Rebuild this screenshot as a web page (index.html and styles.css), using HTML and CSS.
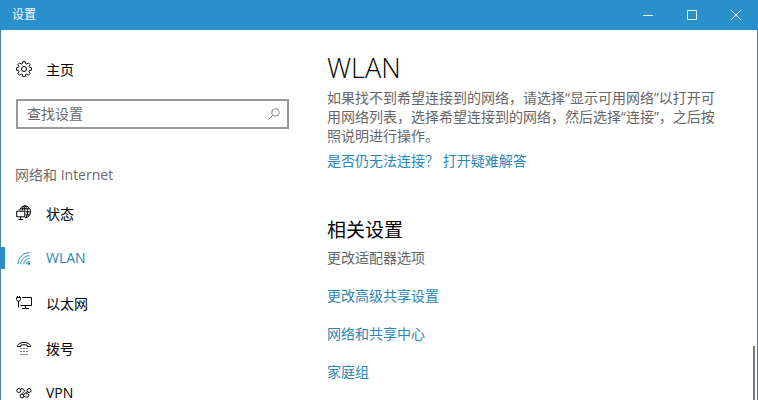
FILE: index.html
```
<!DOCTYPE html>
<html lang="zh-CN">
<head>
    <meta charset="UTF-8">
    <meta name="viewport" content="width=device-width, initial-scale=1.0">
    <title>设置</title>
    <link rel="stylesheet" href="styles.css">
</head>
<body>
    <div class="window">
        <header class="titlebar">
            <span class="title">设置</span>
            <div class="window-buttons">
                <button type="button" aria-label="最小化">
                    <svg width="10" height="10" viewBox="0 0 10 10"><path d="M0 5.5h10"/></svg>
                </button>
                <button type="button" aria-label="最大化">
                    <svg width="10" height="10" viewBox="0 0 10 10"><path d="M.5.5h9v9h-9z"/></svg>
                </button>
                <button type="button" aria-label="关闭">
                    <svg width="10" height="10" viewBox="0 0 10 10"><path d="M0 0l10 10M10 0L0 10"/></svg>
                </button>
            </div>
        </header>

        <div class="body">
            <aside class="sidebar">
                <a class="nav-item home" href="#home">
                    <svg class="icon" viewBox="0 0 16 16">
                        <path d="M6.7.7h2.6l.4 1.9 1 .4 1.7-1.1 1.8 1.8-1.1 1.7.4 1 1.9.4v2.5l-1.9.4-.4 1 1.1 1.7-1.8 1.8-1.7-1.1-1 .4-.4 1.9H6.7l-.4-1.9-1-.4-1.7 1.1-1.8-1.8 1.1-1.7-.4-1-1.9-.4V6.8l1.9-.4.4-1-1.1-1.7 1.8-1.8 1.7 1.1 1-.4z"/>
                        <circle cx="8" cy="8" r="2.5"/>
                    </svg>
                    主页
                </a>

                <div class="search">
                    <input type="text" id="search" placeholder="查找设置" aria-label="查找设置">
                    <svg width="12" height="12" viewBox="0 0 12 12"><circle cx="7.500" cy="4.500" r="3.800"/><path d="M4.800 7.200L.4 11.600"/></svg>
                </div>

                <h2 class="group-title">网络和 Internet</h2>
                <nav>
                    <a class="nav-item" href="#status">
                        <svg class="icon" viewBox="0 0 16 16">
                            <path d="M3.600 5.500C4.200 2.700 6.300.8 8.800.8c3.200 0 5.700 2.700 5.700 6s-2.300 5.700-5.200 6"/>
                            <path d="M6.300 5.500C6.500 2.800 7.500.8 8.800.8c1.600 0 2.800 2.700 2.800 6s-1 5.500-2.300 6M8.800.8v5M4.200 3.800h9.400M9.500 6.800h5M9.500 9.800h4.200"/>
                            <path d="M.7 6.200h8.100v5.600H.7zM4.700 11.800v2.500M2.500 14.500h4.600"/>
                        </svg>
                        状态
                    </a>
                    <a class="nav-item active" href="#wlan" aria-current="page">
                        <svg class="icon" viewBox="0 0 16 16">
                            <path d="M2 14C2 8 7 2.700 13.500 2.700M4.800 14.300c0-4.600 3.900-8.600 8.700-8.600M7.700 14.300c0-3 2.700-5.600 5.800-5.600M10.300 14.300c0-1.500 1.400-2.800 3.200-2.800"/>
                            <circle class="dot" cx="12.900" cy="13.600" r="1.300"/>
                        </svg>
                        WLAN
                    </a>
                    <a class="nav-item" href="#ethernet">
                        <svg class="icon" viewBox="0 0 16 16">
                            <path d="M6 2.500h9.500v8H4.500M9.500 10.500v3M6 13.500h7"/>
                            <path d="M.5 2.500h4v2l-1 1.500h-2l-1-1.500zM1.500 2.500V1M3.500 2.500V1M2.500 6v6.500"/>
                        </svg>
                        以太网
                    </a>
                    <a class="nav-item" href="#dialup">
                        <svg class="icon" viewBox="0 0 16 16">
                            <path d="M1.500 6.500V5.400C2.700 3.500 5.200 2.500 8 2.500s5.300 1 6.500 2.900v1.100h-3.300V5.200C9.200 4.600 6.800 4.600 4.800 5.200v1.300z"/>
                            <path stroke-dasharray="1 2" d="M4.500 8.500h7M4.500 11.500h7M4.500 14.500h7"/>
                        </svg>
                        拨号
                    </a>
                    <a class="nav-item" href="#vpn">
                        <svg class="icon" viewBox="0 0 16 16">
                            <circle cx="2.800" cy="5.500" r="2"/>
                            <circle cx="13" cy="5.500" r="2"/>
                            <circle cx="6" cy="11" r="1.900"/>
                            <path d="M4.500 4.200c2-1.200 3.800 0 3.800 1.600 0 1.300-1.300 2.200-2.800 3.300M11.300 6.600L7.400 9.800M7.900 10.800c1.500 2 5 1.600 5-.6 0-1.500-1.500-2-2.700-1.500"/>
                        </svg>
                        VPN
                    </a>
                </nav>
            </aside>

            <main class="content">
                <h1>WLAN</h1>
                <p>如果找不到希望连接到的网络，请选择“显示可用网络”以打开可用网络列表，选择希望连接到的网络，然后选择“连接”，之后按照说明进行操作。</p>
                <a class="help" href="#troubleshoot">是否仍无法连接？ 打开疑难解答</a>

                <h2>相关设置</h2>
                <ul class="links">
                    <li><a class="visited" href="#adapter">更改适配器选项</a></li>
                    <li><a href="#sharing">更改高级共享设置</a></li>
                    <li><a href="#center">网络和共享中心</a></li>
                    <li><a href="#homegroup">家庭组</a></li>
                </ul>
            </main>
            <div class="scroll-thumb"></div>
        </div>
    </div>
</body>
</html>
```

FILE: styles.css
```
* {
    box-sizing: border-box;
}
body {
    margin: 0;
    font-family: "Open Sans", "Noto Sans CJK SC", sans-serif;
    font-size: 14px;
    color: #000;
    background: #fff;
}
h1, h2, p, ul {
    margin: 0;
    padding: 0;
    font-weight: normal;
}
a {
    color: #2a86b8;
    text-decoration: none;
}
svg {
    fill: none;
    stroke: currentColor;
}
.window {
    display: flex;
    flex-direction: column;
    height: 100vh;
    overflow: hidden;
}
.titlebar {
    display: flex;
    flex-shrink: 0;
    justify-content: space-between;
    height: 30px;
    padding-left: 12px;
    background: #2a90cb;
    color: #fff;
    font-size: 12px;
    line-height: 30px;
}
.window-buttons {
    display: flex;
}
.window-buttons button {
    display: flex;
    align-items: center;
    justify-content: center;
    width: 44px;
    padding: 0;
    border: none;
    background: none;
    color: #e4f6ff;
}
.body {
    position: relative;
    display: flex;
    flex: 1;
    min-height: 0;
    border-left: 1px solid #4a86a0;
    border-right: 1px solid #2f8f9f;
}

/* sidebar */
.sidebar {
    flex: 0 0 288px;
    padding-top: 16px;
}
.nav-item {
    position: relative;
    display: flex;
    align-items: center;
    gap: 14px;
    height: 45px;
    padding-left: 15px;
    color: #000;
}
.nav-item .icon {
    width: 16px;
    height: 16px;
}
.nav-item.active {
    color: #2a86b8;
}
.nav-item.active::before {
    content: "";
    position: absolute;
    left: -1px;
    width: 5px;
    height: 22px;
    background: #2a90c4;
}
.dot {
    fill: currentColor;
    stroke: none;
}
.search {
    display: flex;
    align-items: center;
    height: 30px;
    margin: 8px 0 31px 15px;
    padding: 0 7px 0 9px;
    border: 2px solid #999;
    color: #888;
}
.search input {
    flex: 1;
    min-width: 0;
    height: 24px;
    padding: 0 0 2px;
    border: none;
    outline: none;
    background: none;
    font: inherit;
}
.search input::placeholder {
    color: #6a6a6a;
    opacity: 1;
}
.group-title {
    padding-left: 14px;
    color: #6a6a6a;
    font-size: 14px;
    line-height: 30px;
}

/* content */
.content {
    flex: 1;
    min-width: 0;
    padding: 19px 31px 0 38px;
}
.content h1 {
    font-weight: 300;
    font-size: 27px;
    line-height: 38px;
}
.content p {
    margin-top: 1px;
    color: #666;
    line-height: 19px;
}
.help {
    display: block;
    margin-top: 6px;
    line-height: 20px;
}
.content h2 {
    margin-top: 45px;
    font-size: 19px;
    line-height: 28px;
}
.links {
    list-style: none;
}
.links li {
    margin-bottom: 10px;
    line-height: 28px;
}
.links .visited {
    color: #666;
}
.scroll-thumb {
    position: absolute;
    right: 2px;
    bottom: 0;
    width: 2px;
    height: 54px;
    background: #777;
}
```
